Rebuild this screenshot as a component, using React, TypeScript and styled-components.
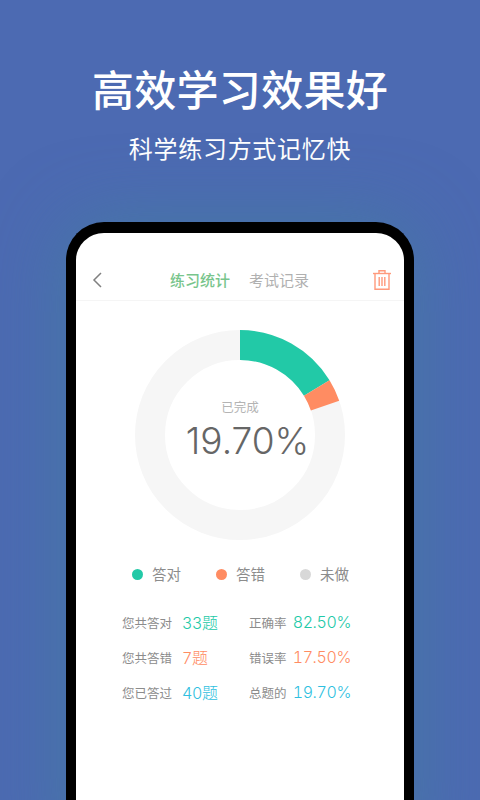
import React from "react";
import styled, { createGlobalStyle } from "styled-components";

const Global = createGlobalStyle`
  html, body { margin: 0; padding: 0; width: 480px; height: 800px; overflow: hidden; }
  body { font-family: "Noto Sans CJK SC", "Noto Sans", sans-serif; }
`;

const Page = styled.div`
  width: 480px;
  height: 800px;
  overflow: hidden;
  display: flex;
  flex-direction: column;
  align-items: center;
  background: #4c6ab2;
`;

const Title = styled.h1`
  margin: 60px 0 0;
  font-size: 42px;
  line-height: 56px;
  font-weight: 500;
  color: #fff;
  letter-spacing: 0.3px;
`;

const Subtitle = styled.p`
  margin: 15px 0 0;
  font-size: 24px;
  line-height: 34px;
  font-weight: 400;
  color: #fff;
  letter-spacing: 0.7px;
`;

const Phone = styled.div`
  margin-top: 57px;
  width: 328px;
  height: 620px;
  flex: none;
  background: #fff;
  border: solid #000;
  border-width: 11px 10px 0;
  border-radius: 38px 38px 0 0;
  display: flex;
  flex-direction: column;
  box-shadow: 0 0 70px 5px rgba(66, 128, 158, 0.62);
`;

const Header = styled.div`
  margin-top: 27px;
  height: 40px;
  padding: 0 12px 0 15px;
  border-bottom: 1px solid #f5f5f5;
  display: flex;
  align-items: center;
  justify-content: space-between;
`;

const Tabs = styled.div`
  display: flex;
  gap: 19px;
  margin-left: 2px;
`;

const Tab = styled.span<{ $active?: boolean }>`
  font-size: 15px;
  line-height: 20px;
  color: ${(p) => (p.$active ? "#78c58c" : "#b0b0b0")};
  font-weight: ${(p) => (p.$active ? 500 : 400)};
`;

const Chart = styled.div`
  position: relative;
  align-self: center;
  margin-top: 29px;
  width: 210px;
  height: 210px;
`;

const ChartCenter = styled.div`
  position: absolute;
  inset: 0;
  display: flex;
  flex-direction: column;
  align-items: center;
  padding-top: 68px;
  box-sizing: border-box;
`;

const ChartLabel = styled.span`
  font-size: 12.5px;
  line-height: 18px;
  color: #b4b4b4;
`;

const ChartValue = styled.span`
  font-family: "Inter", "Noto Sans", sans-serif;
  font-size: 37px;
  line-height: 44px;
  font-weight: 300;
  color: #666;
  margin: 3px 0 0 15px;
`;

const Legend = styled.div`
  margin: 24px 0 0 56px;
  display: flex;
  gap: 35px;
`;

const LegendItem = styled.div`
  display: flex;
  align-items: center;
  gap: 9px;
  font-size: 14.5px;
  line-height: 20px;
  color: #8c8c8c;
`;

const Dot = styled.i<{ $color: string }>`
  display: block;
  width: 11px;
  height: 11px;
  border-radius: 50%;
  background: ${(p) => p.$color};
`;

const Stats = styled.div`
  margin: 26px 53px 0 46px;
  display: flex;
  flex-direction: column;
  gap: 11px;
`;

const StatRow = styled.div`
  display: flex;
  align-items: center;
  height: 24px;
`;

const StatLabel = styled.span<{ $w: number }>`
  font-size: 12.5px;
  color: #8c8c8c;
  width: ${(p) => p.$w}px;
  flex: none;
  white-space: nowrap;
`;

const StatValue = styled.span<{ $color: string; $right?: boolean }>`
  font-family: "Inter", "Noto Sans", "Noto Sans CJK SC", sans-serif;
  font-size: 16px;
  font-weight: 300;
  font-variant-numeric: tabular-nums;
  letter-spacing: -0.4px;
  color: ${(p) => p.$color};
  ${(p) => (p.$right ? "margin-left:auto;" : "width:67px;flex:none;")}
`;

const GREEN = "#22c9a7";
const ORANGE = "#ff8c62";
const BLUE = "#2fbfe0";

function arc(from: number, to: number) {
  const R = 105, r = 75, c = 105;
  const p = (rad: number, a: number) => {
    const t = ((a - 90) * Math.PI) / 180;
    return `${(c + rad * Math.cos(t)).toFixed(2)} ${(c + rad * Math.sin(t)).toFixed(2)}`;
  };
  return `M${p(R, from)} A${R} ${R} 0 0 1 ${p(R, to)} L${p(r, to)} A${r} ${r} 0 0 0 ${p(r, from)} Z`;
}

const rows = [
  ["您共答对", "33题", "正确率", "82.50%", GREEN],
  ["您共答错", "7题", "错误率", "17.50%", ORANGE],
  ["您已答过", "40题", "总题的", "19.70%", BLUE],
];

export default function App() {
  return (
    <Page>
      <Global />
      <Title>高效学习效果好</Title>
      <Subtitle>科学练习方式记忆快</Subtitle>
      <Phone>
        <Header>
          <svg width="14" height="18" viewBox="0 0 14 18" fill="none">
            <path d="M10 2 L3 9 L10 16" stroke="#808080" strokeWidth="1.5" />
          </svg>
          <Tabs>
            <Tab $active>练习统计</Tab>
            <Tab>考试记录</Tab>
          </Tabs>
          <svg width="20" height="22" viewBox="0 0 20 22" fill="none" stroke="#ff9a7c" strokeWidth="1.4">
            <path d="M1 4.5 H19" />
            <path d="M7 4.5 V1.7 H13 V4.5" />
            <path d="M3 4.5 V20.3 H17 V4.5" />
            <path d="M7.2 8 V17 M10 8 V17 M12.8 8 V17" />
          </svg>
        </Header>
        <Chart>
          <svg width="210" height="210" viewBox="0 0 210 210">
            <circle cx="105" cy="105" r="90" fill="none" stroke="#f6f6f6" strokeWidth="30" />
            <path d={arc(0, 58.5)} fill={GREEN} />
            <path d={arc(58.5, 70.9)} fill={ORANGE} />
          </svg>
          <ChartCenter>
            <ChartLabel>已完成</ChartLabel>
            <ChartValue>19.70%</ChartValue>
          </ChartCenter>
        </Chart>
        <Legend>
          <LegendItem><Dot $color={GREEN} />答对</LegendItem>
          <LegendItem><Dot $color={ORANGE} />答错</LegendItem>
          <LegendItem><Dot $color="#d8d8d8" />未做</LegendItem>
        </Legend>
        <Stats>
          {rows.map((r) => (
            <StatRow key={r[0]}>
              <StatLabel $w={60}>{r[0]}</StatLabel>
              <StatValue $color={r[4]}>{r[1]}</StatValue>
              <StatLabel $w={38}>{r[2]}</StatLabel>
              <StatValue $color={r[4]} $right>{r[3]}</StatValue>
            </StatRow>
          ))}
        </Stats>
      </Phone>
    </Page>
  );
}
